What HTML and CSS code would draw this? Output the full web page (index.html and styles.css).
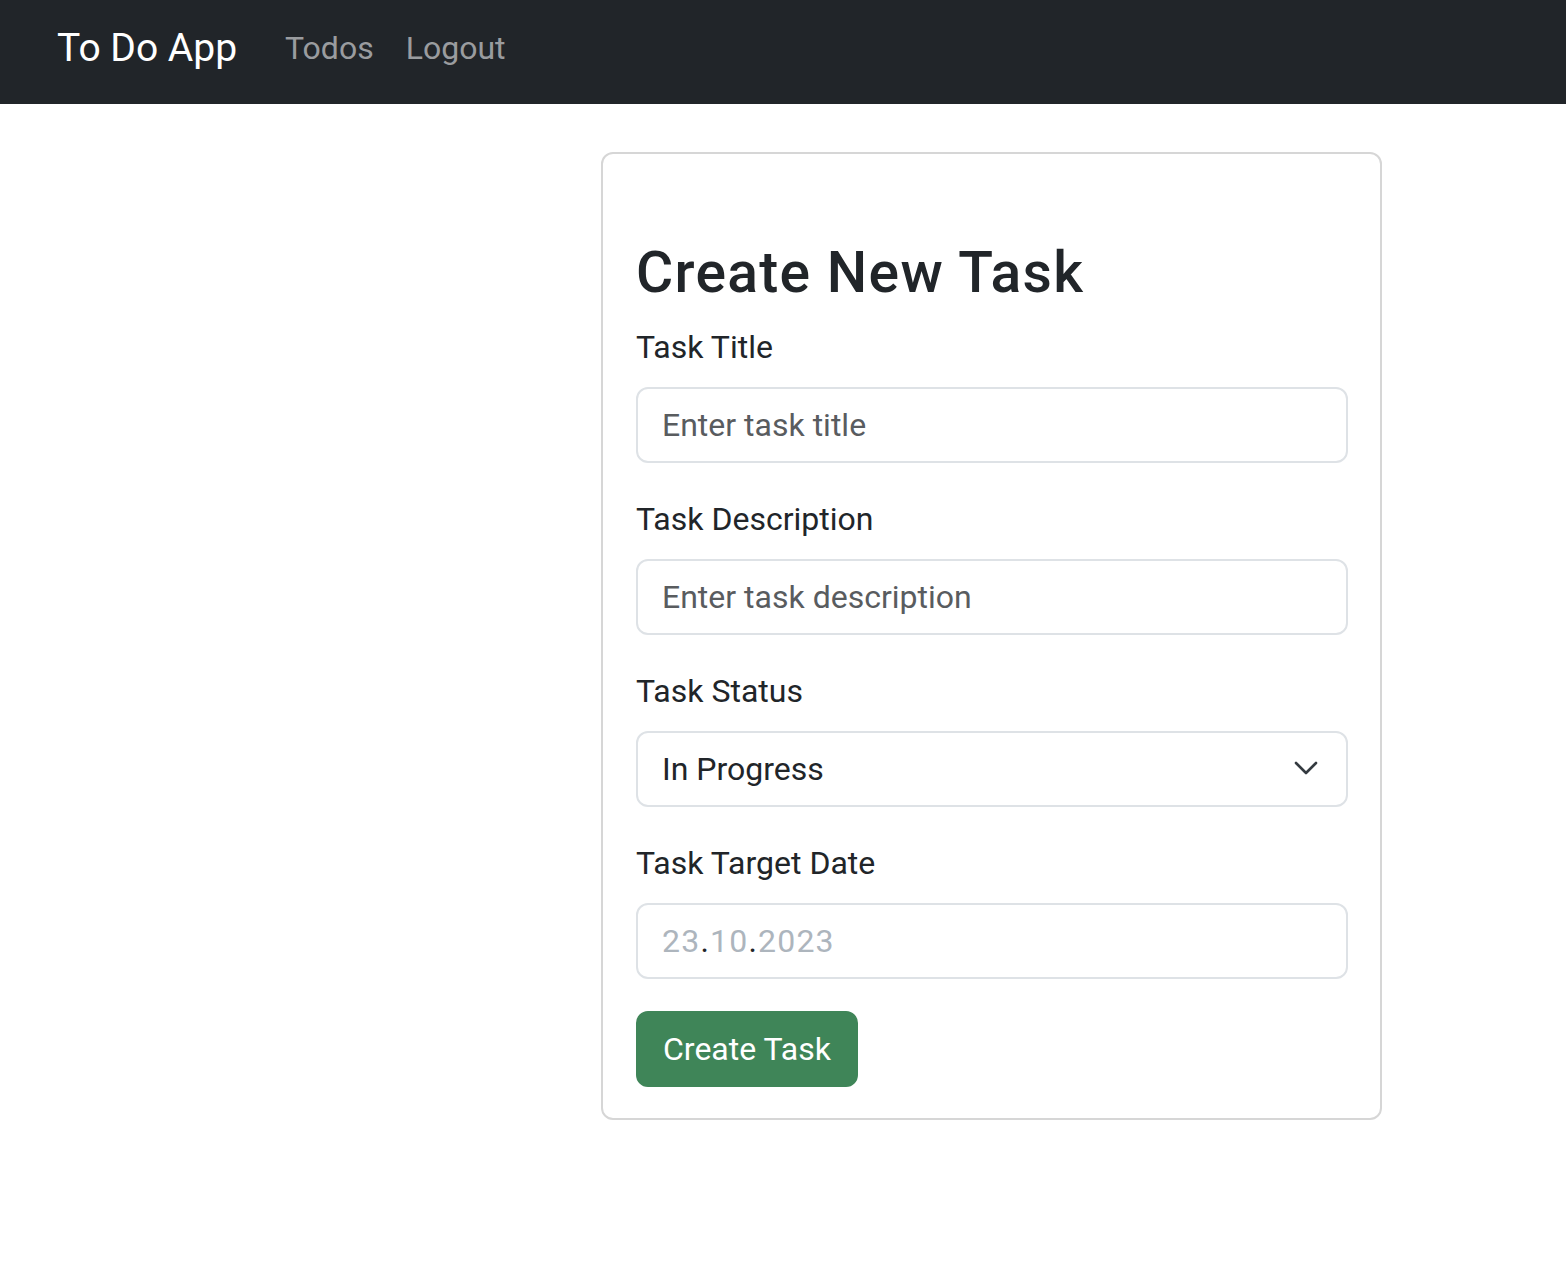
FILE: index.html
```html
<!DOCTYPE html>
<html lang="en">
<head>
<meta charset="utf-8">
<title>To Do App</title>
<link rel="stylesheet" href="styles.css">
</head>
<body>
<nav class="navbar">
  <a class="brand" href="#">To Do App</a>
  <a class="nav-link" href="#">Todos</a>
  <a class="nav-link" href="#">Logout</a>
</nav>
<main class="main">
  <div class="card">
    <h2 class="title">Create New Task</h2>
    <form class="form">
      <div class="field">
        <label class="label" for="t">Task Title</label>
        <input class="control" id="t" type="text" placeholder="Enter task title">
      </div>
      <div class="field">
        <label class="label" for="d">Task Description</label>
        <input class="control" id="d" type="text" placeholder="Enter task description">
      </div>
      <div class="field">
        <label class="label" for="s">Task Status</label>
        <div class="control select" id="s">
          <span>In Progress</span>
          <svg class="chevron" width="24" height="14" viewBox="0 0 24 14"><path d="M2 2l10 10 10-10" fill="none" stroke="#343a40" stroke-width="2.6" stroke-linecap="round" stroke-linejoin="round"/></svg>
        </div>
      </div>
      <div class="field">
        <label class="label">Task Target Date</label>
        <div class="control date"><span class="dig">23</span><span class="sep">.</span><span class="dig">10</span><span class="sep">.</span><span class="dig">2023</span></div>
      </div>
      <button class="btn" type="button">Create Task</button>
    </form>
  </div>
</main>
</body>
</html>
```
FILE: styles.css
```css
* { box-sizing: border-box; }
body {
  margin: 0;
  font-family: Roboto, "Liberation Sans", Arial, sans-serif;
  color: #212529;
  background: #fff;
}
.navbar {
  height: 104px;
  background: #212529;
  display: flex;
  align-items: center;
  padding: 0 0 8px 57px;
}
.brand {
  color: #fff;
  font-size: 39px;
  text-decoration: none;
  margin-right: 32px;
}
.nav-link {
  color: #9a9c9f;
  font-size: 32px;
  text-decoration: none;
  padding: 0 16px;
}
.main {
  padding: 48px 0 0 601px;
}
.card {
  width: 781px;
  border: 2px solid #d6d6d6;
  border-radius: 12px;
  padding: 32px 32px 31px 33px;
}
.title {
  margin: 53px 0 16px;
  font-size: 57px;
  font-weight: 500;
  line-height: 68px;
  letter-spacing: 1.3px;
}
.field { margin-bottom: 32px; }
.label {
  display: block;
  font-size: 32px;
  line-height: 48px;
  margin-bottom: 16px;
}
.control {
  display: block;
  width: 100%;
  height: 76px;
  border: 2px solid #dee2e6;
  border-radius: 12px;
  padding: 12px 24px;
  font-family: inherit;
  font-size: 32px;
  line-height: 48px;
  color: #212529;
  background: #fff;
}
.control::placeholder { color: #595c5f; opacity: 1; }
.select {
  display: flex;
  align-items: center;
  justify-content: space-between;
  padding-right: 28px;
}
.chevron { display: block; margin-bottom: 3px; }
.date { letter-spacing: 1.2px; }
.date .dig { color: #adb5bd; }
.date .sep { color: #212529; }
.btn {
  height: 76px;
  padding: 12px 25px;
  border: 2px solid #3f8558;
  border-radius: 12px;
  background: #3f8558;
  color: #fff;
  font-family: inherit;
  font-size: 32px;
  line-height: 48px;
}
```
